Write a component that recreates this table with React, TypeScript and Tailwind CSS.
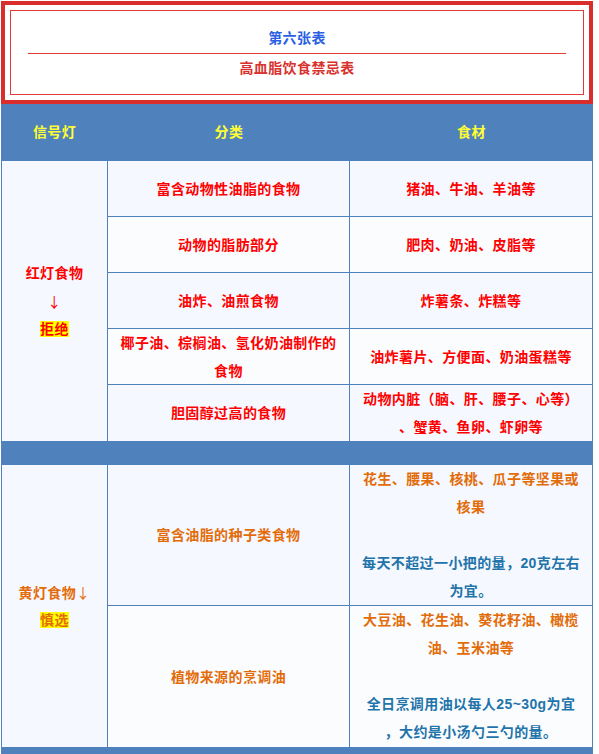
import React from "react";

const FONT = { fontFamily: '"Liberation Sans", "Noto Sans CJK SC", sans-serif' };
const CJK = { fontFamily: '"Noto Sans CJK SC", sans-serif' };

const Lines = ({ lines }: { lines: React.ReactNode[] }) => (
  <div className="text-center">
    {lines.map((l, i) => (
      <div key={i} className="whitespace-nowrap h-[28px] leading-[28px]">
        {l}
      </div>
    ))}
  </div>
);

export default function App() {
  const redRows: { a: string[]; b: string[]; bg: string }[] = [
    { a: ["富含动物性油脂的食物"], b: ["猪油、牛油、羊油等"], bg: "bg-[#f5f8fe]" },
    { a: ["动物的脂肪部分"], b: ["肥肉、奶油、皮脂等"], bg: "bg-[#fbfcfe]" },
    { a: ["油炸、油煎食物"], b: ["炸薯条、炸糕等"], bg: "bg-[#f5f8fe]" },
    { a: ["椰子油、棕榈油、氢化奶油制作的", "食物"], b: ["油炸薯片、方便面、奶油蛋糕等"], bg: "bg-[#fbfcfe]" },
    { a: ["胆固醇过高的食物"], b: ["动物内脏（脑、肝、腰子、心等）", "、蟹黄、鱼卵、虾卵等"], bg: "bg-[#f5f8fe]" },
  ];

  return (
    <div className="w-[599px] h-[754px] bg-white overflow-hidden text-[14px] font-bold tracking-[0.4px]" style={FONT}>
      <div className="ml-[1px] mt-[1px] w-[592px]">
        {/* Title box */}
        <div className="h-[103px] border-[4px] border-[#d92e2c] p-[5px]">
          <div className="h-full border border-[#e23a36] flex flex-col">
            <div className="h-[16px]" />
            <div className="h-[22px] leading-[22px] text-center text-[#2b5fe3]">第六张表</div>
            <div className="h-[4px]" />
            <div className="mx-[17px] h-[1px] bg-[#e33a34]" />
            <div className="h-[3px]" />
            <div className="h-[22px] leading-[22px] text-center text-[#d8322e]">高血脂饮食禁忌表</div>
          </div>
        </div>

        {/* Header */}
        <div className="h-[57px] bg-[#4f81bd] flex items-center text-[#ffff33]">
          <div className="w-[107px] text-center">信号灯</div>
          <div className="w-[242px] text-center">分类</div>
          <div className="flex-1 text-center">食材</div>
        </div>

        {/* Red section */}
        <div className="flex border-x border-[#4f81bd]">
          <div className="w-[106px] border-r border-[#4f81bd] bg-[#f5f8fe] flex items-center justify-center text-[#ff0000]">
            <Lines
              lines={[
                "红灯食物",
                <span className="font-normal" style={CJK}>↓</span>,
                <span className="bg-[#ffff00]">拒绝</span>,
              ]}
            />
          </div>
          <div className="flex-1 flex flex-col">
            {redRows.map((r, i) => (
              <div
                key={i}
                className={`h-[56px] flex text-[#ff0000] ${r.bg} ${i < 4 ? "border-b border-[#4f81bd]" : ""}`}
              >
                <div className="w-[242px] border-r border-[#4f81bd] flex items-center justify-center">
                  <Lines lines={r.a} />
                </div>
                <div className="flex-1 flex items-center justify-center">
                  <Lines lines={r.b} />
                </div>
              </div>
            ))}
          </div>
        </div>

        <div className="h-[24px] bg-[#4f81bd]" />

        {/* Yellow section */}
        <div className="flex border-x border-[#4f81bd]">
          <div className="w-[106px] border-r border-[#4f81bd] bg-[#f5f8fe] flex items-center justify-center text-[#e36c0a]">
            <Lines
              lines={[
                <span>
                  黄灯食物<span className="font-normal" style={CJK}>↓</span>
                </span>,
                <span className="bg-[#ffff00]">慎选</span>,
              ]}
            />
          </div>
          <div className="flex-1 flex flex-col">
            <div className="h-[141px] flex bg-[#f5f8fe] border-b border-[#4f81bd]">
              <div className="w-[242px] border-r border-[#4f81bd] flex items-center justify-center text-[#e36c0a]">
                <Lines lines={["富含油脂的种子类食物"]} />
              </div>
              <div className="flex-1 flex items-start justify-center">
                <div className="text-center">
                  <div className="text-[#e36c0a]">
                    <Lines lines={["花生、腰果、核桃、瓜子等坚果或", "核果"]} />
                  </div>
                  <div className="h-[28px]" />
                  <div className="text-[#1f74aa]">
                    <Lines lines={["每天不超过一小把的量，20克左右", "为宜。"]} />
                  </div>
                </div>
              </div>
            </div>
            <div className="h-[141px] flex bg-[#fbfcfe]">
              <div className="w-[242px] border-r border-[#4f81bd] flex items-center justify-center text-[#e36c0a]">
                <Lines lines={["植物来源的烹调油"]} />
              </div>
              <div className="flex-1 flex items-start justify-center">
                <div className="text-center">
                  <div className="text-[#e36c0a]">
                    <Lines lines={["大豆油、花生油、葵花籽油、橄榄", "油、玉米油等"]} />
                  </div>
                  <div className="h-[28px]" />
                  <div className="text-[#1f74aa]">
                    <Lines lines={["全日烹调用油以每人25~30g为宜", "，大约是小汤勺三勺的量。"]} />
                  </div>
                </div>
              </div>
            </div>
          </div>
        </div>

        <div className="h-[24px] bg-[#4f81bd]" />
      </div>
    </div>
  );
}
